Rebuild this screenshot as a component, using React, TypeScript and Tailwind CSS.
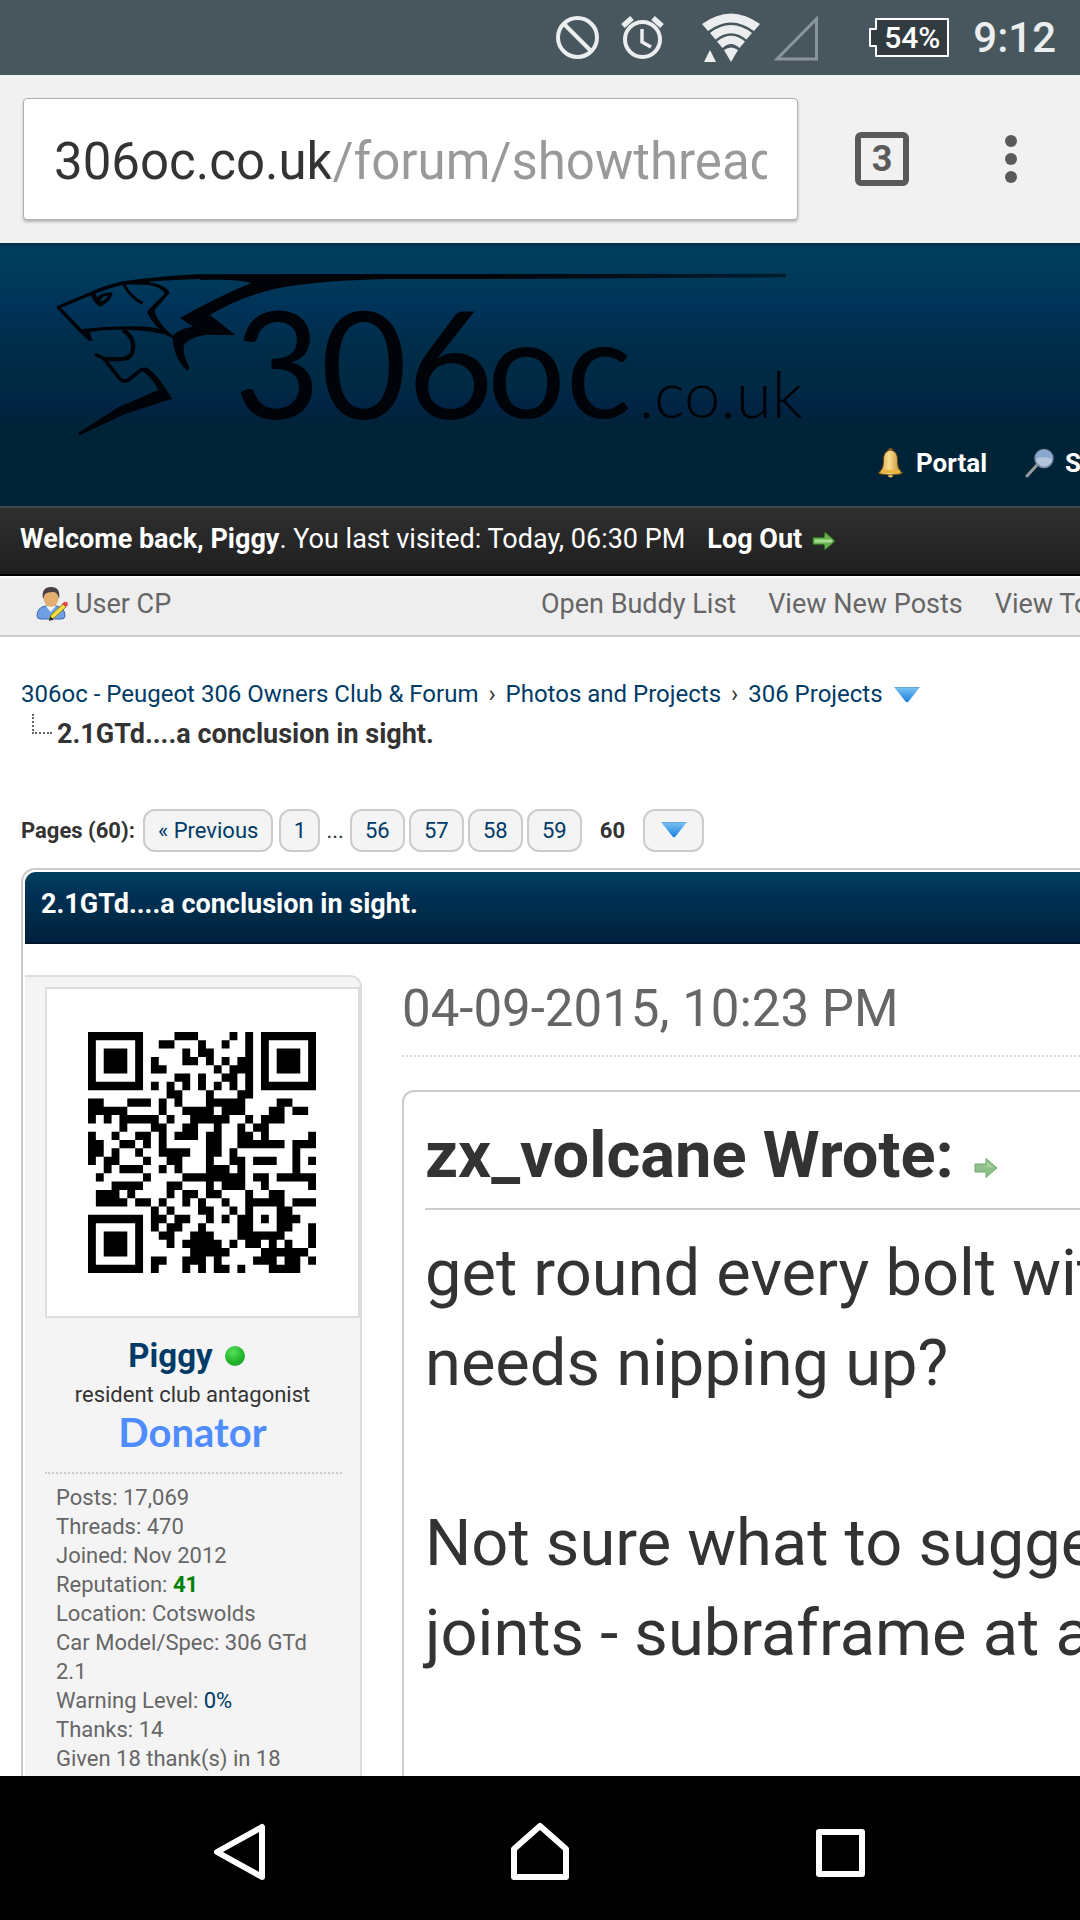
import React from "react";

const QR_RUNS: string[] = [
  "0-6 11-13 18 20 22-28",
  "0 6 9-10 14 17 20 22 28",
  "0 2-4 6 12 14-15 20 22 24-26 28",
  "0 2-4 6 8 12-13 15 17 19-20 22 24-26 28",
  "0 2-4 6 8-9 16 18-20 22 24-26 28",
  "0 6 11-12 14 17-18 20 22 28",
  "0-6 8 10 12 14 16 18 20 22-28",
  "10-11 15 19-20",
  "0-1 5-7 9 11 15-19 24-25",
  "0-4 9 12-15 17-19 23-24 26-27",
  "0 2 4-8 10 13-17 20 22-24",
  "4 8-9 12-13 16 19 21-22",
  "0 3 6-7 9 11-13 15-16 19-20 22 28",
  "0-1 4-5 7 9 15-16 19-24 26-28",
  "0-1 3 6 9-12 15-16 18 26",
  "0 2-3 7 10-11 15 18-19 21-23 26 28",
  "2 4-6 9 11 15-17 19 26",
  "1 7 12-19 21-22 24-28",
  "3-6 10-11 15 17-19 22 28",
  "1-3 5 10 12-13 15-16 20 23-24",
  "1-4 6-7 9 12 14 17 20-24 26-28",
  "8 10 14-15 18 20 24-25",
  "0-6 8-9 11-12 15 17 19-20 22 24-26",
  "0 6 8 10-11 14 19-20 24-25 28",
  "0 2-4 6 9-10 13-15 19-24 28",
  "0 2-4 6 10 12-16 18 20-21 23 25 28",
  "0 2-4 6 13-17 22-27",
  "0 6 8-9 12-14 16 21-23 25-26 28",
  "0-6 8 12 14 16-17 19 23-26",
];

const qrPath = QR_RUNS.map((row, y) =>
  row
    .split(" ")
    .map((run) => {
      const [a, b = a] = run.split("-").map(Number);
      return `M${a} ${y}h${b - a + 1}v1h-${b - a + 1}z`;
    })
    .join("")
).join("");

function StatusBar() {
  return (
    <div className="flex h-[75px] shrink-0 items-center justify-end bg-[#48575e] pr-6 text-[#ebedee]">
      <svg className="mr-5 h-[45px] w-[45px]" viewBox="0 0 45 45" fill="none" stroke="currentColor" strokeWidth="4" aria-label="Do not disturb">
        <circle cx="22.500" cy="22.500" r="19.500" />
        <path d="M9 9 36 36" />
      </svg>
      <svg className="mr-9 h-[45px] w-[45px]" viewBox="0 0 45 45" fill="none" stroke="currentColor" strokeWidth="4" aria-label="Alarm">
        <circle cx="22.500" cy="24.500" r="17.500" />
        <path d="M22 14v13l9 5" strokeWidth="3.500" />
        <path d="M3 11 12 3M42 11 33 3" strokeWidth="5.500" />
      </svg>
      <svg className="mr-3 h-[49px] w-[60px]" viewBox="0 0 60 49" fill="currentColor" aria-label="Wi-Fi">
        <path d="M1 11Q30 -10 59 11L53 18Q30 1 7 18Z" />
        <path d="M9 20Q30 4 51 20L45.500 26.500Q30 14 14.500 26.500Z" />
        <path d="M16 28.500Q30 17 44 28.500L38.500 35Q30 27 21.500 35Z" />
        <path d="M23 37Q30 32 37 37L30 49Z" />
        <path d="M3 49 9 37 15 49Z" />
      </svg>
      <svg className="mr-12 h-[46px] w-[46px]" viewBox="0 0 46 46" fill="none" stroke="#8b9599" strokeWidth="3" aria-label="No signal">
        <path d="M4 44 43.500 44 43.500 4Z" />
      </svg>
      <div className="relative mr-6 flex h-[42px] w-[82px] items-center justify-center pl-2">
        <svg className="absolute inset-0 h-full w-full" viewBox="0 0 82 42" fill="#323c40" stroke="#fff" strokeWidth="2" aria-hidden="true">
          <path d="M9 2H81V39H9V29H3V12H9Z" strokeLinejoin="round" />
        </svg>
        <span className="relative text-[30px] leading-[36px] font-medium text-white">54%</span>
      </div>
      <span className="text-[42px] leading-[48px] font-medium">9:12</span>
    </div>
  );
}

function BrowserBar() {
  return (
    <div className="flex shrink-0 items-center bg-[#f1f1f1] py-[23px] pr-[50px] pl-[23px]">
      <div className="flex h-[122px] min-w-0 flex-1 items-center rounded-[4px] border border-[#b0b0b0] bg-white px-[30px] pt-[6px] shadow-[0_2px_3px_rgba(0,0,0,0.25)]">
        <input
          aria-label="Address"
          type="text"
          readOnly
          value="306oc.co.uk/forum/showthread.php"
          className="w-full bg-[linear-gradient(90deg,#333_276px,#999_276px)] bg-clip-text text-[51px] leading-[64px] text-transparent outline-none"
        />
      </div>
      <button type="button" aria-label="3 open tabs" className="ml-[57px] flex h-[54px] w-[54px] items-center justify-center rounded-[6px] border-[6px] border-[#5a5a5a] text-[36px] leading-[42px] font-bold text-[#5a5a5a]">
        3
      </button>
      <button type="button" aria-label="Menu" className="ml-[83px] flex w-[38px] flex-col items-center gap-[6px]">
        <span className="h-3 w-3 rounded-full bg-[#5a5a5a]" />
        <span className="h-3 w-3 rounded-full bg-[#5a5a5a]" />
        <span className="h-3 w-3 rounded-full bg-[#5a5a5a]" />
      </button>
    </div>
  );
}

function Logo() {
  return (
    <svg className="ml-[50px] h-[180px] w-[760px]" viewBox="150 75 2280 540" role="img" aria-label="306oc.co.uk">
      <defs>
        <linearGradient id="tail" x1="0" x2="1">
          <stop offset="0.500" stopColor="#000307" />
          <stop offset="1" stopColor="#001e30" />
        </linearGradient>
      </defs>
      <path fill="url(#tail)" d="M370 124Q500 106 600 103L2358 101V112L1500 117H600Q480 120 380 132Z" />
      <g fill="#000307">
        <path d="M600 104H1320V115C1100 116 930 124 820 148C740 168 690 190 630 225L707 286L620 284C580 290 555 303 551 320C550 350 560 368 569 384L562 392C533 368 520 330 517 290C530 270 560 263 580 260L540 234C610 195 690 155 753 130C740 120 640 118 600 120Z" />
        <path d="M234 580L355 502L475 450C462 425 450 410 430 396L438 383C470 400 495 440 516 476L375 522L240 585Z" />
        <path d="M440 215L462 205C468 240 495 270 525 292L510 292C480 275 455 245 440 215Z" />
        <path d="M440 125Q500 135 509 158L462 212L445 210L495 160Q480 138 440 134Z" />
        <path d="M238 268Q330 256 420 259Q490 262 522 290Q440 268 380 270Q320 268 270 276L277 304L262 296Z" />
        <path fillRule="evenodd" d="M272 164L285 155L291 172Q310 155 338 158Q333 185 300 200Q284 192 272 164ZM300 184Q320 180 324 166Q306 168 300 184Z" />
      </g>
      <g fill="none" stroke="#000307" strokeWidth="10" strokeLinejoin="round">
        <path d="M272 300L240 270L175 202L275 160Q320 140 370 129Q400 128 445 130" />
        <path d="M370 130C382 155 400 176 428 190" strokeWidth="9" />
        <path d="M368 270C400 288 404 318 396 338C388 360 370 358 310 357" strokeWidth="13" />
        <path d="M285 343Q320 357 322 370Q340 390 358 415Q372 430 388 418L415 396Q432 382 448 394" strokeWidth="11" />
      </g>
      <g fill="#000307" fontFamily="Lato, sans-serif">
        <text x="702" y="537" fontSize="448">306</text>
        <text x="1462" y="535" fontSize="415">oc</text>
        <text x="1916" y="533" fontSize="196" fontWeight="300">.co.uk</text>
      </g>
    </svg>
  );
}

function BellIcon() {
  return (
    <svg className="h-[32px] w-[27px]" viewBox="0 0 27 32" aria-hidden="true">
      <defs>
        <linearGradient id="bell" x1="0" x2="1">
          <stop offset="0" stopColor="#d99a2b" />
          <stop offset="0.450" stopColor="#f7dc93" />
          <stop offset="1" stopColor="#c07d18" />
        </linearGradient>
      </defs>
      <circle cx="13.500" cy="3.500" r="2.500" fill="#8a5a14" />
      <circle cx="13.500" cy="28" r="2.500" fill="#f0c255" />
      <path d="M13.500 3C8 4 6.500 8 6.500 13C6.500 20 5 23 1.500 26C3 28.500 24 28.500 25.500 26C22 23 20.500 20 20.500 13C20.500 8 19 4 13.500 3Z" fill="url(#bell)" stroke="#6b4512" strokeWidth="1" />
      <path d="M4 24.500H23" stroke="#e8b53e" strokeWidth="3" />
    </svg>
  );
}

function SearchIcon() {
  return (
    <svg className="h-[32px] w-[30px]" viewBox="0 0 30 32" aria-hidden="true">
      <path d="M2 29 12 18" stroke="#9a9a9a" strokeWidth="3" strokeLinecap="round" />
      <circle cx="19" cy="11.500" r="9" fill="#b4c4da" stroke="#7488a5" strokeWidth="1.500" />
      <path d="M10.500 12Q17 8 27 12Q25 3.500 18 3.500Q12 5 10.500 12Z" fill="#86a5d0" />
    </svg>
  );
}

function ArrowIcon({ soft = false }: { soft?: boolean }) {
  return soft ? (
    <svg className="h-[22px] w-[24px]" viewBox="0 0 24 22" aria-hidden="true">
      <path d="M1 7H12V1.500L23 11 12 20.500V15H1Z" fill="#8fc08a" stroke="#73ab71" strokeWidth="1" />
      <path d="M2 9.500H13V5L19 10.500Z" fill="#acd5a4" />
    </svg>
  ) : (
    <svg className="mt-1 h-[20px] w-[24px]" viewBox="0 0 24 20" aria-hidden="true">
      <path d="M1 6.500H12L13 1 23 10 13 19 12 13.500H1Z" fill="#65b04d" stroke="#2f6b22" strokeWidth="1" />
      <path d="M2.500 10H20" stroke="#a8dc90" strokeWidth="3" />
    </svg>
  );
}

function UserIcon() {
  return (
    <svg className="h-[36px] w-[32px]" viewBox="0 0 32 36" aria-hidden="true">
      <path d="M1 30Q1 21 10 20H20Q29 21 29 30Q29 33 25 33H5Q1 33 1 30Z" fill="#6f9fe3" stroke="#3f69b0" />
      <path d="M10 20 14.500 26 20 20Z" fill="#f1f4fa" />
      <ellipse cx="15" cy="12" rx="7.500" ry="9" fill="#e3b070" />
      <path d="M7 13Q5 1 15 1Q25 1 23 13Q22 7 18 6Q11 6 9 8Z" fill="#4a4044" />
      <path d="M13 34 15 29 27 18 30 21 18 32Z" fill="#f2de3c" stroke="#8b8122" />
      <path d="M26 18 28 16Q32 15 32 19L30 21Z" fill="#e5484d" />
      <path d="M13 35 14.500 30.500 17.500 33.500Z" fill="#222" />
    </svg>
  );
}

function DownIcon() {
  return (
    <svg className="h-[17px] w-[28px]" viewBox="0 0 28 17" aria-hidden="true">
      <defs>
        <linearGradient id="down" x1="0" y1="0" x2="0" y2="1">
          <stop offset="0" stopColor="#7cc4f2" />
          <stop offset="1" stopColor="#1b7fe0" />
        </linearGradient>
      </defs>
      <path d="M1 1H27L15.500 15.500Q14 17 12.500 15.500Z" fill="url(#down)" />
      <path d="M2 1.500H26" stroke="#5fa9dc" />
    </svg>
  );
}

const navy = "text-[#003a66]";
const pageLink = "flex h-[43px] items-center justify-center rounded-[12px] border-2 border-[#ccc] bg-[#f4f4f4] text-[#003a66]";

function Header() {
  return (
    <header className="overflow-hidden">
      <div className="bg-[linear-gradient(180deg,#00304a_0px,#003e5d_6px,#003d5c_22px,#003258_68px,#002c48_105px,#002a44_142px,#022344_164px,#002336_184px,#012338_262px)] pt-[22px] pb-[26px]">
        <Logo />
        <nav className="flex h-[35px] items-center gap-[38px] pl-[877px] text-[26px] leading-[32px] font-bold whitespace-nowrap text-white">
          <a href="#portal" className="flex items-center gap-3">
            <BellIcon />
            Portal
          </a>
          <a href="#search" className="flex items-center gap-[10px]">
            <SearchIcon />
            Search
          </a>
        </nav>
      </div>
      <div className="flex h-[70px] items-center border-t-2 border-b-2 border-t-[#40474a] border-b-black bg-linear-to-b from-[#2f2f2f] to-[#1f1f1f] px-5 pb-1 text-[27px] leading-[32px] whitespace-nowrap text-white">
        <p>
          <strong>Welcome back, Piggy</strong>. You last visited: Today, 06:30 PM
        </p>
        <a href="#logout" className="ml-[22px] flex items-center gap-[10px] font-bold">
          Log Out
          <ArrowIcon />
        </a>
      </div>
      <nav className="flex h-[61px] items-center border-t-2 border-b-2 border-t-white border-b-[#ccc] bg-[#eee] pb-[5px] pl-[36px] text-[27px] leading-[32px] whitespace-nowrap text-[#666]">
        <a href="#usercp" className="flex w-[505px] shrink-0 items-center gap-[7px]">
          <UserIcon />
          User CP
        </a>
        <div className="flex gap-8">
          <a href="#buddies">Open Buddy List</a>
          <a href="#new">View New Posts</a>
          <a href="#today">View Today's Posts</a>
        </div>
      </nav>
    </header>
  );
}

function Breadcrumb() {
  return (
    <nav aria-label="Breadcrumb" className="px-[21px] pt-[37px] leading-[40px] whitespace-nowrap">
      <div className={"flex items-center gap-[10px] text-[24px] " + navy}>
        <span>
          <a href="#home">306oc - Peugeot 306 Owners Club &amp; Forum</a>
          <span className="mx-1 text-[#333]"> › </span>
          <a href="#photos">Photos and Projects</a>
          <span className="mx-1 text-[#333]"> › </span>
          <a href="#projects">306 Projects</a>
        </span>
        <DownIcon />
      </div>
      <div className="flex pl-[11px] text-[27px]">
        <span className="h-[20px] w-[20px] border-b-2 border-l-2 border-dotted border-[#666]" />
        <strong className="ml-[5px]">2.1GTd....a conclusion in sight.</strong>
      </div>
    </nav>
  );
}

function Pagination() {
  return (
    <nav aria-label="Pages" className="mt-[55px] flex items-center px-[21px] text-[22px] leading-[28px]">
      <strong className="mr-2">Pages (60):</strong>
      <a href="#p59" className={pageLink + " px-[13px]"}>« Previous</a>
      <a href="#p1" className={pageLink + " ml-[6px] w-[41px]"}>1</a>
      <span className="mx-[6px]">...</span>
      <div className="flex gap-1">
        <a href="#p56" className={pageLink + " w-[55px]"}>56</a>
        <a href="#p57" className={pageLink + " w-[55px]"}>57</a>
        <a href="#p58" className={pageLink + " w-[55px]"}>58</a>
        <a href="#p59b" className={pageLink + " w-[55px]"}>59</a>
      </div>
      <strong className="mx-[18px]">60</strong>
      <button type="button" aria-label="Jump to page" className="flex h-[43px] w-[61px] items-start justify-center rounded-[12px] border-2 border-[#ccc] bg-[#f4f4f4] pt-[10px]">
        <DownIcon />
      </button>
    </nav>
  );
}

function Author() {
  return (
    <aside className="w-[337px] shrink-0 rounded-tr-[12px] border-t-2 border-r-2 border-[#ddd] bg-[#f4f4f4] pt-[10px] pl-5 text-[22px]">
      <div className="flex h-[331px] items-center justify-center border-2 border-[#ddd] bg-white pr-[2px]">
        <svg className="h-[241px] w-[228px]" viewBox="0 0 29 29" preserveAspectRatio="none" shapeRendering="geometricPrecision" role="img" aria-label="Piggy's avatar">
          <path d={qrPath} fill="#000" />
        </svg>
      </div>
      <div className="flex flex-col items-center pt-[17px] pr-[20px]">
        <div className="flex items-center gap-3 pr-3">
          <a href="#piggy" className={"text-[33px] leading-[42px] font-bold " + navy}>Piggy</a>
          <span className="h-5 w-5 rounded-full bg-[radial-gradient(circle_at_40%_30%,#58e05c,#22b52c_55%,#1d9a2a)]" />
        </div>
        <span className="leading-[35px] text-[#333]">resident club antagonist</span>
        <span className="font-[Lato] text-[40px] leading-[41px] font-bold text-[#4f8cff]">Donator</span>
      </div>
      <div className="mt-[19px] mr-[18px] border-t-2 border-dotted border-[#ccc] pt-[9px] pr-2 pl-[11px] leading-[29px] text-[#666]">
        <p>Posts: 17,069</p>
        <p>Threads: 470</p>
        <p>Joined: Nov 2012</p>
        <p>Reputation: <strong className="text-[#008000]">41</strong></p>
        <p>Location: Cotswolds</p>
        <p>Car Model/Spec: 306 GTd 2.1</p>
        <p>Warning Level: <a href="#warning" className={navy}>0%</a></p>
        <p>Thanks: 14</p>
        <p>Given 18 thank(s) in 18 post(s)</p>
      </div>
    </aside>
  );
}

function Post() {
  return (
    <article className="ml-10 min-w-0 flex-1 pt-[6px] whitespace-nowrap">
      <div className="border-b-2 border-dotted border-[#ddd] pb-[18px] text-[51px] leading-[56px] text-[#666]">04-09-2015, 10:23 PM</div>
      <blockquote className="-mr-5 mt-[33px] min-h-[720px] rounded-[12px] border-2 border-[#ccc] pt-[18px] pl-[21px] text-[65px] leading-[90px]">
        <div className="flex items-center border-b-2 border-[#ccc] pb-2">
          <strong>zx_volcane Wrote:</strong>
          <a href="#quoted" aria-label="Go to quoted post" className="mt-[26px] ml-5">
            <ArrowIcon soft />
          </a>
        </div>
        <p className="mt-[18px]">get round every bolt with<br />needs nipping up?</p>
        <p className="mt-[90px]">Not sure what to suggest<br />joints - subraframe at all</p>
      </blockquote>
    </article>
  );
}

function NavigationBar() {
  return (
    <nav aria-label="System" className="flex h-[144px] shrink-0 items-center justify-center gap-[242px] bg-black pt-[10px] pb-[4px] text-white">
      <button type="button" aria-label="Back">
        <svg className="h-[60px] w-[60px]" viewBox="0 0 60 60" fill="none" stroke="currentColor" strokeWidth="6" strokeLinejoin="round">
          <path d="M54 6V56L9 31Z" />
        </svg>
      </button>
      <button type="button" aria-label="Home">
        <svg className="h-[60px] w-[60px]" viewBox="0 0 60 60" fill="none" stroke="currentColor" strokeWidth="6" strokeLinejoin="round">
          <path d="M30 5 56 28V56H4V28Z" />
        </svg>
      </button>
      <button type="button" aria-label="Recent apps">
        <svg className="h-[60px] w-[60px]" viewBox="0 0 60 60" fill="none" stroke="currentColor" strokeWidth="6" strokeLinejoin="round">
          <path d="M7 11H50V53H7Z" />
        </svg>
      </button>
    </nav>
  );
}

export default function App() {
  return (
    <div className="flex h-screen flex-col overflow-hidden bg-white font-[Roboto,sans-serif] text-[#333]">
      <StatusBar />
      <BrowserBar />
      <main className="min-h-0 flex-1 overflow-hidden">
        <Header />
        <Breadcrumb />
        <Pagination />
        <section className="mt-4 ml-[21px] rounded-tl-[14px] border-t-2 border-l-2 border-[#ccc] pt-[2px] pl-[2px]">
          <h1 className="flex h-[72px] items-center rounded-tl-[11px] border-b-2 border-[#00162a] bg-[linear-gradient(180deg,#003e5d,#003d5c_8%,#003056_32%,#002c48_62%,#002240_92%)] px-4 pb-[6px] text-[27px] leading-[32px] font-bold text-white">
            2.1GTd....a conclusion in sight.
          </h1>
          <div className="flex pt-[31px]">
            <Author />
            <Post />
          </div>
        </section>
      </main>
      <NavigationBar />
    </div>
  );
}
